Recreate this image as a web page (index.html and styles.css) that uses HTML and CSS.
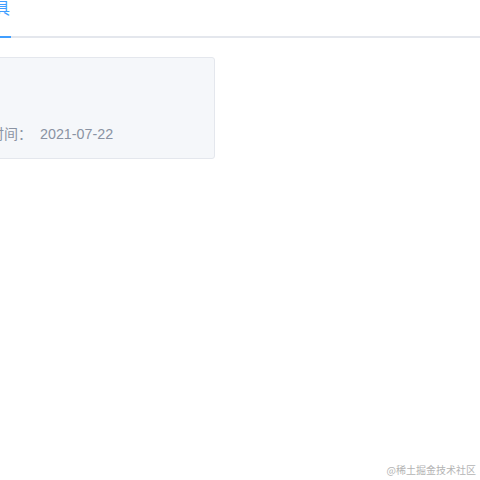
FILE: index.html
```html
<!DOCTYPE html>
<html lang="zh-CN">
<head>
<meta charset="utf-8">
<title>工具</title>
<link rel="stylesheet" href="styles.css">
</head>
<body>
<div class="page">
  <div class="tabs">
    <div class="tab tab-active">工具</div>
  </div>
  <div class="card">
    <div class="meta">时间：<span class="date">2021-07-22</span></div>
  </div>
</div>
<div class="watermark">@稀土掘金技术社区</div>
</body>
</html>
```

FILE: styles.css
```css
html, body {
  margin: 0;
  padding: 0;
  background: #ffffff;
  overflow: hidden;
}
body {
  width: 480px;
  height: 480px;
  position: relative;
  font-family: "Liberation Sans", "Noto Sans CJK SC", sans-serif;
}
.page {
  margin: -4px 0 0 -22px;
}
.tabs {
  display: flex;
  border-bottom: 2px solid #e4e7ed;
}
.tab {
  font-size: 16px;
  line-height: 22px;
  padding: 0 1px 18px 0;
  margin-bottom: -2px;
  font-family: "Noto Sans CJK SC", sans-serif;
}
.tab-active {
  color: #409eff;
  border-bottom: 2px solid #409eff;
}
.card {
  margin-top: 19px;
  width: 237px;
  box-sizing: border-box;
  background: #f5f7fa;
  border: 1px solid #e4e7ed;
  border-radius: 3px;
  padding: 66px 11px 14px;
}
.meta {
  font-size: 14px;
  line-height: 20px;
  color: #8a93a3;
  white-space: nowrap;
  font-family: "Liberation Sans", "Noto Sans CJK SC", sans-serif;
}
.date {
  margin-left: 8px;
  font-size: 14.3px;
}
.watermark {
  position: absolute;
  right: 4px;
  bottom: 3px;
  font-size: 10px;
  line-height: 14px;
  color: #b4b4b4;
  font-family: "Noto Sans CJK SC", sans-serif;
}
```
